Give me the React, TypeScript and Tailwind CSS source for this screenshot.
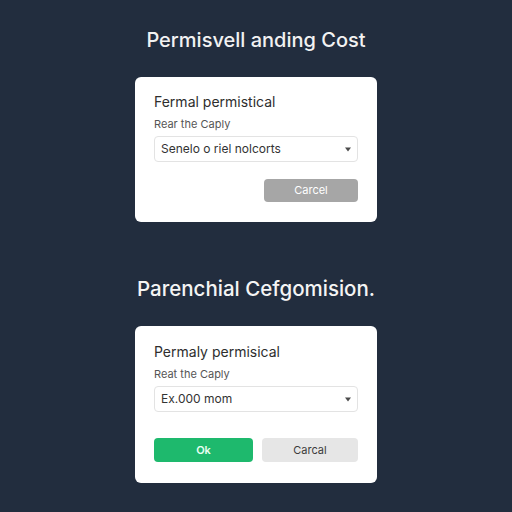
const Chevron = () => (
  <svg width="8" height="5" viewBox="0 0 8 5" className="shrink-0">
    <path d="M1 0.5h6L4 4.5z" fill="#4b4b4b" />
  </svg>
);

type CardProps = {
  heading: string;
  label: string;
  value: string;
  withOk?: boolean;
};

const Card = ({ heading, label, value, withOk }: CardProps) => (
  <div
    className={
      withOk
        ? "w-[242px] rounded-[6px] bg-white px-[19px] pt-[17px] pb-[21px]"
        : "w-[242px] rounded-[6px] bg-white px-[19px] pt-[16px] pb-[20px]"
    }
  >
    <p className="text-[14px] leading-[18px] text-[#2e2e2e]">{heading}</p>
    <p className="mt-[6px] text-[11px] leading-[14px] text-[#555]">{label}</p>
    <div className="mt-[5px] flex h-[26px] items-center justify-between rounded-[4px] border border-[#e3e3e3] pl-[6px] pr-[5px]">
      <span className="text-[12px] text-[#333]">{value}</span>
      <Chevron />
    </div>
    {withOk ? (
      <div className="mt-[26px] flex gap-[9px]">
        <button className="h-[24px] w-[99px] rounded-[4px] bg-[#1eb96d] text-[11px] font-semibold text-[#e9fff3]">
          Ok
        </button>
        <button className="h-[24px] flex-1 rounded-[4px] bg-[#e6e6e6] text-[11px] text-[#3c3c3c]">
          Carcal
        </button>
      </div>
    ) : (
      <div className="mt-[17px] flex justify-end">
        <button className="h-[23px] w-[94px] rounded-[4px] bg-[#a6a6a6] text-[11px] text-white">
          Carcel
        </button>
      </div>
    )}
  </div>
);

export default function App() {
  return (
    <div
      className="flex h-[512px] w-[512px] flex-col items-center bg-[#222d3e] pt-[26px]"
      style={{ fontFamily: "Inter, 'Liberation Sans', sans-serif" }}
    >
      <h1 className="text-[20px] leading-[28px] font-medium text-[#f2f2f2]">
        Permisvell anding Cost
      </h1>
      <div className="mt-[23px]">
        <Card
          heading="Fermal permistical"
          label="Rear the Caply"
          value="Senelo o riel nolcorts"
        />
      </div>
      <h2 className="mt-[53px] text-[20.5px] leading-[28px] font-medium text-[#f4f4f4]">
        Parenchial Cefgomision.
      </h2>
      <div className="mt-[23px]">
        <Card
          heading="Permaly permisical"
          label="Reat the Caply"
          value="Ex.000 mom"
          withOk
        />
      </div>
    </div>
  );
}
